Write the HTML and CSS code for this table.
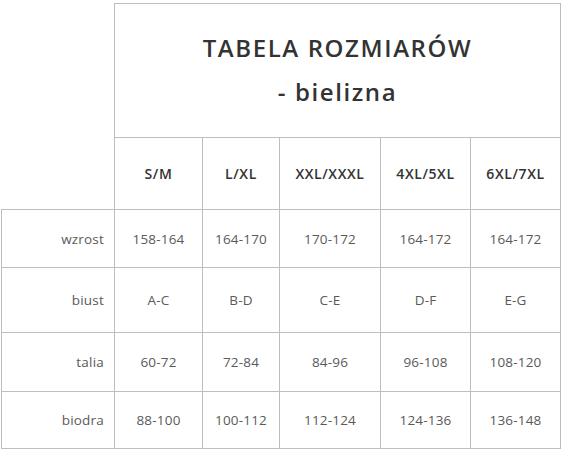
FILE: index.html
```html
<!DOCTYPE html>
<html lang="pl">
<head>
<meta charset="utf-8">
<title>Tabela rozmiarów</title>
<link rel="stylesheet" href="styles.css">
</head>
<body>
<table class="sizes">
  <colgroup>
    <col class="c-label">
    <col class="c1">
    <col class="c2">
    <col class="c3">
    <col class="c4">
    <col class="c5">
  </colgroup>
  <tr class="r-title">
    <td class="corner" rowspan="2"></td>
    <td class="title" colspan="5">TABELA ROZMIARÓW<br>- bielizna</td>
  </tr>
  <tr class="r-head">
    <th>S/M</th><th>L/XL</th><th>XXL/XXXL</th><th>4XL/5XL</th><th>6XL/7XL</th>
  </tr>
  <tr class="r1">
    <td class="label">wzrost</td><td>158-164</td><td>164-170</td><td>170-172</td><td>164-172</td><td>164-172</td>
  </tr>
  <tr class="r2">
    <td class="label">biust</td><td>A-C</td><td>B-D</td><td>C-E</td><td>D-F</td><td>E-G</td>
  </tr>
  <tr class="r3">
    <td class="label">talia</td><td>60-72</td><td>72-84</td><td>84-96</td><td>96-108</td><td>108-120</td>
  </tr>
  <tr class="r4">
    <td class="label">biodra</td><td>88-100</td><td>100-112</td><td>112-124</td><td>124-136</td><td>136-148</td>
  </tr>
</table>
</body>
</html>
```
FILE: styles.css
```css
html, body {
  margin: 0;
  padding: 0;
  background: #ffffff;
}
body {
  padding: 3px 0 0 1px;
  font-family: "Open Sans", "Liberation Sans", sans-serif;
}
.sizes {
  border-collapse: collapse;
  table-layout: fixed;
  width: 560px;
}
.c-label { width: 113px; }
.c1 { width: 88px; }
.c2 { width: 77px; }
.c3 { width: 101px; }
.c4 { width: 90px; }
.c5 { width: 90px; }
.sizes td, .sizes th {
  border: 1px solid #bdbdbd;
  padding: 0;
  text-align: center;
  vertical-align: middle;
  font-size: 13.5px;
  color: #5a5a5a;
  font-weight: 400;
  letter-spacing: 0.2px;
}
.sizes td.corner {
  border-top: none;
  border-left: none;
}
.r-title { height: 134px; }
.r-head { height: 72px; }
.r1 { height: 58px; }
.r2 { height: 65px; }
.r3 { height: 59px; }
.r4 { height: 57px; }
.sizes td.title {
  font-size: 24px;
  line-height: 44px;
  font-weight: 600;
  color: #333333;
  letter-spacing: 1.6px;
  padding-bottom: 2px;
}
.sizes th {
  font-weight: 600;
  color: #333333;
  font-size: 14px;
  letter-spacing: 0.6px;
}
.sizes td.label {
  text-align: right;
  padding-right: 10px;
}
```
